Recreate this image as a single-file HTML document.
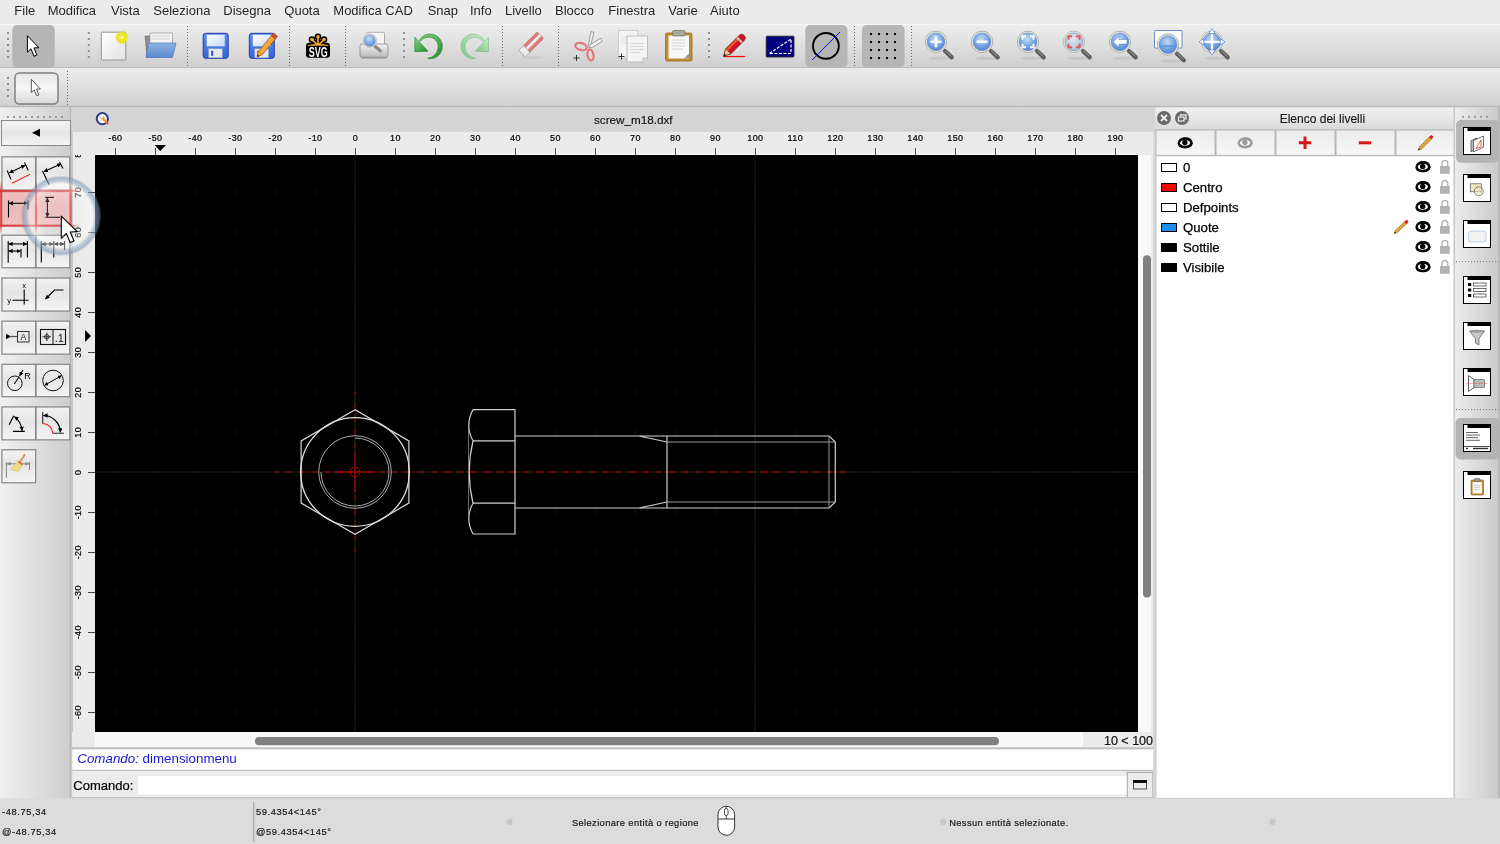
<!DOCTYPE html>
<html><head><meta charset="utf-8"><title>LibreCAD</title>
<style>html,body{margin:0;padding:0;overflow:hidden;background:#dcdcdc;width:1500px;height:844px}svg{display:block;will-change:transform}text{font-family:"Liberation Sans",sans-serif}</style>
</head><body><svg width="1500" height="844" viewBox="0 0 1500 844">
<defs>
<linearGradient id="gTb1" x1="0" y1="0" x2="0" y2="1"><stop offset="0" stop-color="#eeeeee"/><stop offset="1" stop-color="#cfcfcf"/></linearGradient>
<linearGradient id="gTb2" x1="0" y1="0" x2="0" y2="1"><stop offset="0" stop-color="#ececec"/><stop offset="1" stop-color="#d0d0d0"/></linearGradient>
<linearGradient id="gDockH" x1="0" y1="0" x2="1" y2="0"><stop offset="0" stop-color="#f0f0f0"/><stop offset="1" stop-color="#cdcdcd"/></linearGradient>
<linearGradient id="gBtn" x1="0" y1="0" x2="0" y2="1"><stop offset="0" stop-color="#f4f4f4"/><stop offset="0.5" stop-color="#e6e6e6"/><stop offset="1" stop-color="#f4f4f4"/></linearGradient>
<linearGradient id="gPanTitle" x1="0" y1="0" x2="0" y2="1"><stop offset="0" stop-color="#f0f0f0"/><stop offset="1" stop-color="#dcdcdc"/></linearGradient>
<linearGradient id="gLyrBtn" x1="0" y1="0" x2="0" y2="1"><stop offset="0" stop-color="#ececec"/><stop offset="1" stop-color="#f6f6f6"/></linearGradient>
</defs>
<rect x="0" y="0" width="1500" height="844" fill="#dcdcdc"/>
<rect x="0" y="0" width="1500" height="24" fill="#ececec"/>
<text x="14.3" y="15.3" font-size="13" fill="#262626" text-anchor="start" >File</text>
<text x="47.7" y="15.3" font-size="13" fill="#262626" text-anchor="start" >Modifica</text>
<text x="111" y="15.3" font-size="13" fill="#262626" text-anchor="start" >Vista</text>
<text x="153.3" y="15.3" font-size="13" fill="#262626" text-anchor="start" >Seleziona</text>
<text x="223.3" y="15.3" font-size="13" fill="#262626" text-anchor="start" >Disegna</text>
<text x="284.3" y="15.3" font-size="13" fill="#262626" text-anchor="start" >Quota</text>
<text x="333.3" y="15.3" font-size="13" fill="#262626" text-anchor="start" >Modifica CAD</text>
<text x="427.7" y="15.3" font-size="13" fill="#262626" text-anchor="start" >Snap</text>
<text x="470" y="15.3" font-size="13" fill="#262626" text-anchor="start" >Info</text>
<text x="505" y="15.3" font-size="13" fill="#262626" text-anchor="start" >Livello</text>
<text x="555" y="15.3" font-size="13" fill="#262626" text-anchor="start" >Blocco</text>
<text x="608.3" y="15.3" font-size="13" fill="#262626" text-anchor="start" >Finestra</text>
<text x="668.3" y="15.3" font-size="13" fill="#262626" text-anchor="start" >Varie</text>
<text x="710" y="15.3" font-size="13" fill="#262626" text-anchor="start" >Aiuto</text>
<rect x="0" y="24" width="1500" height="44" fill="url(#gTb1)"/>
<rect x="0" y="24" width="1500" height="1" fill="#f7f7f7"/>
<rect x="0" y="67.2" width="1500" height="1.1" fill="#bababa"/>
<rect x="0" y="68.3" width="1500" height="1" fill="#f7f7f7"/>
<rect x="0" y="69.3" width="1500" height="37.7" fill="url(#gTb2)"/>
<rect x="0" y="105.8" width="1500" height="1.5" fill="#b8b8b8"/>
<rect x="0" y="107.5" width="71" height="691" fill="url(#gDockH)"/>
<rect x="69.8" y="107.5" width="1.6" height="691" fill="#b9b9b9"/>
<rect x="7" y="116" width="2" height="2" fill="#9a9a9a"/>
<rect x="13" y="116" width="2" height="2" fill="#9a9a9a"/>
<rect x="19" y="116" width="2" height="2" fill="#9a9a9a"/>
<rect x="25" y="116" width="2" height="2" fill="#9a9a9a"/>
<rect x="31" y="116" width="2" height="2" fill="#9a9a9a"/>
<rect x="37" y="116" width="2" height="2" fill="#9a9a9a"/>
<rect x="43" y="116" width="2" height="2" fill="#9a9a9a"/>
<rect x="49" y="116" width="2" height="2" fill="#9a9a9a"/>
<rect x="55" y="116" width="2" height="2" fill="#9a9a9a"/>
<rect x="61" y="116" width="2" height="2" fill="#9a9a9a"/>
<rect x="1.5" y="120.5" width="69" height="25" fill="url(#gBtn)" stroke="#8a8a8a" stroke-width="1"/>
<path d="M32,132.8 L40,128.8 L40,136.8 Z" fill="#000"/>
<rect x="71.5" y="107.5" width="1083" height="24.3" fill="#d4d4d4"/>
<rect x="71.5" y="131.8" width="1082.5" height="23.2" fill="#ebebeb"/>
<rect x="95" y="154" width="1043" height="1" fill="#f9f9f9"/>
<rect x="71.5" y="155" width="23.5" height="577" fill="#ebebeb"/>
<rect x="71.4" y="131.8" width="1.2" height="616" fill="#bdbdbd"/>
<text x="633.3" y="123.9" font-size="11.7" fill="#111" text-anchor="middle" stroke="#111" stroke-width="0.15">screw_m18.dxf</text>
<rect x="95" y="155" width="1043" height="577" fill="#000"/>
<rect x="1138" y="155" width="15.3" height="592.8" fill="#f9f9f9"/>
<rect x="95" y="732" width="1043" height="15.5" fill="#f9f9f9"/>
<rect x="72" y="732" width="23" height="15.5" fill="#ebebeb"/>
<rect x="1151" y="155" width="2.3" height="592.8" fill="#ececec"/>
<rect x="1143" y="255.2" width="8" height="342.3" rx="4" fill="#808080"/>
<rect x="255" y="737" width="744" height="8.3" rx="4.1" fill="#808080"/>
<rect x="1083" y="732" width="70.3" height="15.5" fill="#ebebeb"/>
<text x="1153" y="744.8" font-size="12.5" fill="#111" text-anchor="end" stroke="#111" stroke-width="0.2">10 &lt; 100</text>
<rect x="72" y="747.3" width="1081.3" height="2.2" fill="#c0c0c0"/>
<rect x="72.5" y="749.5" width="1080.8" height="20.5" fill="#ffffff"/>
<rect x="72.5" y="769.8" width="1080.8" height="1.2" fill="#bdbdbd"/>
<text x="77.3" y="762.7" font-size="13.35" fill="#1818d8"><tspan font-style="italic">Comando:</tspan> dimensionmenu</text>
<rect x="72.5" y="771" width="1080.8" height="27" fill="#ececec"/>
<text x="73.3" y="790" font-size="13" fill="#000" text-anchor="start" stroke="#000" stroke-width="0.2">Comando:</text>
<rect x="138" y="776" width="989" height="18.5" fill="#ffffff"/>
<rect x="1127.3" y="772.3" width="25.6" height="25.2" fill="#ececec" stroke="#a8a8a8" stroke-width="1"/>
<rect x="1133.5" y="780.5" width="13" height="8.5" fill="#f0f0f0" stroke="#555" stroke-width="1"/>
<rect x="1133" y="780" width="14" height="3" fill="#111"/>
<rect x="70" y="797" width="1085" height="1.5" fill="#c4c4c4"/>
<rect x="1153.3" y="107.5" width="2.4" height="691" fill="#d6d6d6"/>
<rect x="1155.5" y="107.5" width="299" height="21" fill="url(#gPanTitle)"/>
<text x="1322.4" y="123.3" font-size="12" fill="#1a1a1a" text-anchor="middle" stroke="#1a1a1a" stroke-width="0.15">Elenco dei livelli</text>
<circle cx="1164" cy="118" r="7" fill="#6a6a6a"/>
<path d="M1161,115 L1167,121 M1167,115 L1161,121" stroke="#eee" stroke-width="1.8"/>
<circle cx="1182" cy="118" r="7" fill="#6a6a6a"/>
<rect x="1178.5" y="117" width="5.5" height="4" fill="none" stroke="#eee" stroke-width="1.2"/>
<path d="M1180.5,116.5 V114.8 H1186 V119 H1184.3" fill="none" stroke="#eee" stroke-width="1.2"/>
<rect x="1155.5" y="129.3" width="299" height="27" fill="#b8b8b8"/>
<rect x="1156.5" y="130.6" width="58" height="24.3" fill="url(#gLyrBtn)"/>
<rect x="1216.5" y="130.6" width="58" height="24.3" fill="url(#gLyrBtn)"/>
<rect x="1276.5" y="130.6" width="58" height="24.3" fill="url(#gLyrBtn)"/>
<rect x="1336.5" y="130.6" width="58" height="24.3" fill="url(#gLyrBtn)"/>
<rect x="1396.5" y="130.6" width="58" height="24.3" fill="url(#gLyrBtn)"/>
<rect x="1155.8" y="156.3" width="298" height="641.7" fill="#ffffff"/>
<rect x="1155.3" y="156" width="1.2" height="642" fill="#c8c8c8"/>
<rect x="1453.5" y="107.5" width="1.5" height="691" fill="#c8c8c8"/>
<rect x="1155.3" y="797.8" width="299.7" height="1.2" fill="#c8c8c8"/>
<rect x="1161.5" y="163.5" width="15" height="8" fill="#ffffff" stroke="#000" stroke-width="1"/>
<text x="1183" y="171.5" font-size="13.2" fill="#000" text-anchor="start" stroke="#000" stroke-width="0.25">0</text>
<rect x="1161.5" y="183.5" width="15" height="8" fill="#ff0000" stroke="#000" stroke-width="1"/>
<text x="1183" y="191.5" font-size="13.2" fill="#000" text-anchor="start" stroke="#000" stroke-width="0.25">Centro</text>
<rect x="1161.5" y="203.5" width="15" height="8" fill="#ffffff" stroke="#000" stroke-width="1"/>
<text x="1183" y="211.5" font-size="13.2" fill="#000" text-anchor="start" stroke="#000" stroke-width="0.25">Defpoints</text>
<rect x="1161.5" y="223.5" width="15" height="8" fill="#1e8cf0" stroke="#000" stroke-width="1"/>
<text x="1183" y="231.5" font-size="13.2" fill="#000" text-anchor="start" stroke="#000" stroke-width="0.25">Quote</text>
<rect x="1161.5" y="243.5" width="15" height="8" fill="#000000" stroke="#000" stroke-width="1"/>
<text x="1183" y="251.5" font-size="13.2" fill="#000" text-anchor="start" stroke="#000" stroke-width="0.25">Sottile</text>
<rect x="1161.5" y="263.5" width="15" height="8" fill="#000000" stroke="#000" stroke-width="1"/>
<text x="1183" y="271.5" font-size="13.2" fill="#000" text-anchor="start" stroke="#000" stroke-width="0.25">Visibile</text>
<linearGradient id="gDockR" x1="0" y1="0" x2="1" y2="0"><stop offset="0" stop-color="#ececec"/><stop offset="1" stop-color="#c9c9c9"/></linearGradient>
<rect x="1455" y="107.5" width="45" height="691" fill="url(#gDockR)"/>
<rect x="1498" y="107.5" width="2" height="691" fill="#bababa"/>
<rect x="1462" y="115.8" width="2" height="2" fill="#9a9a9a"/>
<rect x="1468" y="115.8" width="2" height="2" fill="#9a9a9a"/>
<rect x="1474" y="115.8" width="2" height="2" fill="#9a9a9a"/>
<rect x="1480" y="115.8" width="2" height="2" fill="#9a9a9a"/>
<rect x="1486" y="115.8" width="2" height="2" fill="#9a9a9a"/>
<rect x="0" y="798.5" width="1500" height="45.5" fill="#dcdcdc"/>
<text x="2" y="814.9" font-size="9.3" fill="#1a1a1a" text-anchor="start" letter-spacing="0.6" stroke="#1a1a1a" stroke-width="0.2">-48.75,34</text>
<text x="2" y="835.3" font-size="9.3" fill="#1a1a1a" text-anchor="start" letter-spacing="0.6" stroke="#1a1a1a" stroke-width="0.2">@-48.75,34</text>
<rect x="253.3" y="802" width="1" height="40" fill="#9a9a9a"/>
<text x="256" y="814.9" font-size="9.3" fill="#1a1a1a" text-anchor="start" letter-spacing="0.6" stroke="#1a1a1a" stroke-width="0.2">59.4354&lt;145°</text>
<text x="256" y="835.3" font-size="9.3" fill="#1a1a1a" text-anchor="start" letter-spacing="0.6" stroke="#1a1a1a" stroke-width="0.2">@59.4354&lt;145°</text>
<circle cx="509.5" cy="822" r="3" fill="#c6c6c6"/>
<text x="571.9" y="826" font-size="9.3" fill="#1a1a1a" text-anchor="start" letter-spacing="0.4" stroke="#1a1a1a" stroke-width="0.2">Selezionare entità o regione</text>
<circle cx="943.2" cy="822" r="3" fill="#c6c6c6"/>
<text x="949.2" y="826" font-size="9.3" fill="#1a1a1a" text-anchor="start" letter-spacing="0.4" stroke="#1a1a1a" stroke-width="0.2">Nessun entità selezionate.</text>
<circle cx="1272.5" cy="822" r="3" fill="#c6c6c6"/>
<rect x="718" y="806.3" width="16.6" height="29" rx="8.3" fill="#ffffff" stroke="#333" stroke-width="1"/>
<path d="M718.3,819 H734.3" stroke="#333" stroke-width="1"/>
<rect x="724.5" y="808.5" width="3.5" height="7" rx="1.7" fill="#fff" stroke="#333" stroke-width="0.9"/>
<path d="M726.3,806.5 V808.5 M726.3,815.5 V819" stroke="#333" stroke-width="0.9"/>
<rect x="115" y="148" width="1" height="7" fill="#484848"/>
<text x="115.4" y="140.8" font-size="9" fill="#000" text-anchor="middle" letter-spacing="0.45" stroke="#000" stroke-width="0.2">-60</text>
<rect x="155" y="148" width="1" height="7" fill="#484848"/>
<text x="155.4" y="140.8" font-size="9" fill="#000" text-anchor="middle" letter-spacing="0.45" stroke="#000" stroke-width="0.2">-50</text>
<rect x="195" y="148" width="1" height="7" fill="#484848"/>
<text x="195.4" y="140.8" font-size="9" fill="#000" text-anchor="middle" letter-spacing="0.45" stroke="#000" stroke-width="0.2">-40</text>
<rect x="235" y="148" width="1" height="7" fill="#484848"/>
<text x="235.4" y="140.8" font-size="9" fill="#000" text-anchor="middle" letter-spacing="0.45" stroke="#000" stroke-width="0.2">-30</text>
<rect x="275" y="148" width="1" height="7" fill="#484848"/>
<text x="275.4" y="140.8" font-size="9" fill="#000" text-anchor="middle" letter-spacing="0.45" stroke="#000" stroke-width="0.2">-20</text>
<rect x="315" y="148" width="1" height="7" fill="#484848"/>
<text x="315.4" y="140.8" font-size="9" fill="#000" text-anchor="middle" letter-spacing="0.45" stroke="#000" stroke-width="0.2">-10</text>
<rect x="355" y="148" width="1" height="7" fill="#484848"/>
<text x="355.4" y="140.8" font-size="9" fill="#000" text-anchor="middle" letter-spacing="0.45" stroke="#000" stroke-width="0.2">0</text>
<rect x="395" y="148" width="1" height="7" fill="#484848"/>
<text x="395.4" y="140.8" font-size="9" fill="#000" text-anchor="middle" letter-spacing="0.45" stroke="#000" stroke-width="0.2">10</text>
<rect x="435" y="148" width="1" height="7" fill="#484848"/>
<text x="435.4" y="140.8" font-size="9" fill="#000" text-anchor="middle" letter-spacing="0.45" stroke="#000" stroke-width="0.2">20</text>
<rect x="475" y="148" width="1" height="7" fill="#484848"/>
<text x="475.4" y="140.8" font-size="9" fill="#000" text-anchor="middle" letter-spacing="0.45" stroke="#000" stroke-width="0.2">30</text>
<rect x="515" y="148" width="1" height="7" fill="#484848"/>
<text x="515.4" y="140.8" font-size="9" fill="#000" text-anchor="middle" letter-spacing="0.45" stroke="#000" stroke-width="0.2">40</text>
<rect x="555" y="148" width="1" height="7" fill="#484848"/>
<text x="555.4" y="140.8" font-size="9" fill="#000" text-anchor="middle" letter-spacing="0.45" stroke="#000" stroke-width="0.2">50</text>
<rect x="595" y="148" width="1" height="7" fill="#484848"/>
<text x="595.4" y="140.8" font-size="9" fill="#000" text-anchor="middle" letter-spacing="0.45" stroke="#000" stroke-width="0.2">60</text>
<rect x="635" y="148" width="1" height="7" fill="#484848"/>
<text x="635.4" y="140.8" font-size="9" fill="#000" text-anchor="middle" letter-spacing="0.45" stroke="#000" stroke-width="0.2">70</text>
<rect x="675" y="148" width="1" height="7" fill="#484848"/>
<text x="675.4" y="140.8" font-size="9" fill="#000" text-anchor="middle" letter-spacing="0.45" stroke="#000" stroke-width="0.2">80</text>
<rect x="715" y="148" width="1" height="7" fill="#484848"/>
<text x="715.4" y="140.8" font-size="9" fill="#000" text-anchor="middle" letter-spacing="0.45" stroke="#000" stroke-width="0.2">90</text>
<rect x="755" y="148" width="1" height="7" fill="#484848"/>
<text x="755.4" y="140.8" font-size="9" fill="#000" text-anchor="middle" letter-spacing="0.45" stroke="#000" stroke-width="0.2">100</text>
<rect x="795" y="148" width="1" height="7" fill="#484848"/>
<text x="795.4" y="140.8" font-size="9" fill="#000" text-anchor="middle" letter-spacing="0.45" stroke="#000" stroke-width="0.2">110</text>
<rect x="835" y="148" width="1" height="7" fill="#484848"/>
<text x="835.4" y="140.8" font-size="9" fill="#000" text-anchor="middle" letter-spacing="0.45" stroke="#000" stroke-width="0.2">120</text>
<rect x="875" y="148" width="1" height="7" fill="#484848"/>
<text x="875.4" y="140.8" font-size="9" fill="#000" text-anchor="middle" letter-spacing="0.45" stroke="#000" stroke-width="0.2">130</text>
<rect x="915" y="148" width="1" height="7" fill="#484848"/>
<text x="915.4" y="140.8" font-size="9" fill="#000" text-anchor="middle" letter-spacing="0.45" stroke="#000" stroke-width="0.2">140</text>
<rect x="955" y="148" width="1" height="7" fill="#484848"/>
<text x="955.4" y="140.8" font-size="9" fill="#000" text-anchor="middle" letter-spacing="0.45" stroke="#000" stroke-width="0.2">150</text>
<rect x="995" y="148" width="1" height="7" fill="#484848"/>
<text x="995.4" y="140.8" font-size="9" fill="#000" text-anchor="middle" letter-spacing="0.45" stroke="#000" stroke-width="0.2">160</text>
<rect x="1035" y="148" width="1" height="7" fill="#484848"/>
<text x="1035.4" y="140.8" font-size="9" fill="#000" text-anchor="middle" letter-spacing="0.45" stroke="#000" stroke-width="0.2">170</text>
<rect x="1075" y="148" width="1" height="7" fill="#484848"/>
<text x="1075.4" y="140.8" font-size="9" fill="#000" text-anchor="middle" letter-spacing="0.45" stroke="#000" stroke-width="0.2">180</text>
<rect x="1115" y="148" width="1" height="7" fill="#484848"/>
<text x="1115.4" y="140.8" font-size="9" fill="#000" text-anchor="middle" letter-spacing="0.45" stroke="#000" stroke-width="0.2">190</text>
<clipPath id="cpVR"><rect x="72" y="155" width="23" height="577"/></clipPath>
<g clip-path="url(#cpVR)">
<rect x="88" y="752" width="7" height="1" fill="#484848"/>
<text transform="translate(81.0,752.2) rotate(-90)" x="0" y="0" font-size="9" fill="#000" stroke="#000" stroke-width="0.2" text-anchor="middle" letter-spacing="0.45">-70</text>
<rect x="88" y="712" width="7" height="1" fill="#484848"/>
<text transform="translate(81.0,712.2) rotate(-90)" x="0" y="0" font-size="9" fill="#000" stroke="#000" stroke-width="0.2" text-anchor="middle" letter-spacing="0.45">-60</text>
<rect x="88" y="672" width="7" height="1" fill="#484848"/>
<text transform="translate(81.0,672.2) rotate(-90)" x="0" y="0" font-size="9" fill="#000" stroke="#000" stroke-width="0.2" text-anchor="middle" letter-spacing="0.45">-50</text>
<rect x="88" y="632" width="7" height="1" fill="#484848"/>
<text transform="translate(81.0,632.2) rotate(-90)" x="0" y="0" font-size="9" fill="#000" stroke="#000" stroke-width="0.2" text-anchor="middle" letter-spacing="0.45">-40</text>
<rect x="88" y="592" width="7" height="1" fill="#484848"/>
<text transform="translate(81.0,592.2) rotate(-90)" x="0" y="0" font-size="9" fill="#000" stroke="#000" stroke-width="0.2" text-anchor="middle" letter-spacing="0.45">-30</text>
<rect x="88" y="552" width="7" height="1" fill="#484848"/>
<text transform="translate(81.0,552.2) rotate(-90)" x="0" y="0" font-size="9" fill="#000" stroke="#000" stroke-width="0.2" text-anchor="middle" letter-spacing="0.45">-20</text>
<rect x="88" y="512" width="7" height="1" fill="#484848"/>
<text transform="translate(81.0,512.2) rotate(-90)" x="0" y="0" font-size="9" fill="#000" stroke="#000" stroke-width="0.2" text-anchor="middle" letter-spacing="0.45">-10</text>
<rect x="88" y="472" width="7" height="1" fill="#484848"/>
<text transform="translate(81.0,472.2) rotate(-90)" x="0" y="0" font-size="9" fill="#000" stroke="#000" stroke-width="0.2" text-anchor="middle" letter-spacing="0.45">0</text>
<rect x="88" y="432" width="7" height="1" fill="#484848"/>
<text transform="translate(81.0,432.2) rotate(-90)" x="0" y="0" font-size="9" fill="#000" stroke="#000" stroke-width="0.2" text-anchor="middle" letter-spacing="0.45">10</text>
<rect x="88" y="392" width="7" height="1" fill="#484848"/>
<text transform="translate(81.0,392.2) rotate(-90)" x="0" y="0" font-size="9" fill="#000" stroke="#000" stroke-width="0.2" text-anchor="middle" letter-spacing="0.45">20</text>
<rect x="88" y="352" width="7" height="1" fill="#484848"/>
<text transform="translate(81.0,352.2) rotate(-90)" x="0" y="0" font-size="9" fill="#000" stroke="#000" stroke-width="0.2" text-anchor="middle" letter-spacing="0.45">30</text>
<rect x="88" y="312" width="7" height="1" fill="#484848"/>
<text transform="translate(81.0,312.2) rotate(-90)" x="0" y="0" font-size="9" fill="#000" stroke="#000" stroke-width="0.2" text-anchor="middle" letter-spacing="0.45">40</text>
<rect x="88" y="272" width="7" height="1" fill="#484848"/>
<text transform="translate(81.0,272.2) rotate(-90)" x="0" y="0" font-size="9" fill="#000" stroke="#000" stroke-width="0.2" text-anchor="middle" letter-spacing="0.45">50</text>
<rect x="88" y="232" width="7" height="1" fill="#484848"/>
<text transform="translate(81.0,232.2) rotate(-90)" x="0" y="0" font-size="9" fill="#000" stroke="#000" stroke-width="0.2" text-anchor="middle" letter-spacing="0.45">60</text>
<rect x="88" y="192" width="7" height="1" fill="#484848"/>
<text transform="translate(81.0,192.2) rotate(-90)" x="0" y="0" font-size="9" fill="#000" stroke="#000" stroke-width="0.2" text-anchor="middle" letter-spacing="0.45">70</text>
<rect x="88" y="152" width="7" height="1" fill="#484848"/>
<text transform="translate(81.0,152.2) rotate(-90)" x="0" y="0" font-size="9" fill="#000" stroke="#000" stroke-width="0.2" text-anchor="middle" letter-spacing="0.45">80</text>
</g>
<rect x="71.5" y="155" width="1.2" height="577" fill="#c4c4c4"/>
<path d="M154.6,145.1 L166,145.1 L160.3,151 Z" fill="#000"/>
<path d="M85.1,330 L91,336 L85.1,342 Z" fill="#000"/>
<clipPath id="cpCv"><rect x="95" y="155" width="1043" height="577"/></clipPath>
<g clip-path="url(#cpCv)">
<rect x="354.5" y="155" width="1" height="577" fill="#1c1c1c"/>
<rect x="754.5" y="155" width="1" height="577" fill="#1c1c1c"/>
<rect x="95" y="471.5" width="1043" height="1" fill="#1c1c1c"/>
<path d="M114.5,751.5h1v1h-1zM114.5,711.5h1v1h-1zM114.5,671.5h1v1h-1zM114.5,631.5h1v1h-1zM114.5,591.5h1v1h-1zM114.5,551.5h1v1h-1zM114.5,511.5h1v1h-1zM114.5,471.5h1v1h-1zM114.5,431.5h1v1h-1zM114.5,391.5h1v1h-1zM114.5,351.5h1v1h-1zM114.5,311.5h1v1h-1zM114.5,271.5h1v1h-1zM114.5,231.5h1v1h-1zM114.5,191.5h1v1h-1zM114.5,151.5h1v1h-1zM154.5,751.5h1v1h-1zM154.5,711.5h1v1h-1zM154.5,671.5h1v1h-1zM154.5,631.5h1v1h-1zM154.5,591.5h1v1h-1zM154.5,551.5h1v1h-1zM154.5,511.5h1v1h-1zM154.5,471.5h1v1h-1zM154.5,431.5h1v1h-1zM154.5,391.5h1v1h-1zM154.5,351.5h1v1h-1zM154.5,311.5h1v1h-1zM154.5,271.5h1v1h-1zM154.5,231.5h1v1h-1zM154.5,191.5h1v1h-1zM154.5,151.5h1v1h-1zM194.5,751.5h1v1h-1zM194.5,711.5h1v1h-1zM194.5,671.5h1v1h-1zM194.5,631.5h1v1h-1zM194.5,591.5h1v1h-1zM194.5,551.5h1v1h-1zM194.5,511.5h1v1h-1zM194.5,471.5h1v1h-1zM194.5,431.5h1v1h-1zM194.5,391.5h1v1h-1zM194.5,351.5h1v1h-1zM194.5,311.5h1v1h-1zM194.5,271.5h1v1h-1zM194.5,231.5h1v1h-1zM194.5,191.5h1v1h-1zM194.5,151.5h1v1h-1zM234.5,751.5h1v1h-1zM234.5,711.5h1v1h-1zM234.5,671.5h1v1h-1zM234.5,631.5h1v1h-1zM234.5,591.5h1v1h-1zM234.5,551.5h1v1h-1zM234.5,511.5h1v1h-1zM234.5,471.5h1v1h-1zM234.5,431.5h1v1h-1zM234.5,391.5h1v1h-1zM234.5,351.5h1v1h-1zM234.5,311.5h1v1h-1zM234.5,271.5h1v1h-1zM234.5,231.5h1v1h-1zM234.5,191.5h1v1h-1zM234.5,151.5h1v1h-1zM274.5,751.5h1v1h-1zM274.5,711.5h1v1h-1zM274.5,671.5h1v1h-1zM274.5,631.5h1v1h-1zM274.5,591.5h1v1h-1zM274.5,551.5h1v1h-1zM274.5,511.5h1v1h-1zM274.5,471.5h1v1h-1zM274.5,431.5h1v1h-1zM274.5,391.5h1v1h-1zM274.5,351.5h1v1h-1zM274.5,311.5h1v1h-1zM274.5,271.5h1v1h-1zM274.5,231.5h1v1h-1zM274.5,191.5h1v1h-1zM274.5,151.5h1v1h-1zM314.5,751.5h1v1h-1zM314.5,711.5h1v1h-1zM314.5,671.5h1v1h-1zM314.5,631.5h1v1h-1zM314.5,591.5h1v1h-1zM314.5,551.5h1v1h-1zM314.5,511.5h1v1h-1zM314.5,471.5h1v1h-1zM314.5,431.5h1v1h-1zM314.5,391.5h1v1h-1zM314.5,351.5h1v1h-1zM314.5,311.5h1v1h-1zM314.5,271.5h1v1h-1zM314.5,231.5h1v1h-1zM314.5,191.5h1v1h-1zM314.5,151.5h1v1h-1zM354.5,751.5h1v1h-1zM354.5,711.5h1v1h-1zM354.5,671.5h1v1h-1zM354.5,631.5h1v1h-1zM354.5,591.5h1v1h-1zM354.5,551.5h1v1h-1zM354.5,511.5h1v1h-1zM354.5,471.5h1v1h-1zM354.5,431.5h1v1h-1zM354.5,391.5h1v1h-1zM354.5,351.5h1v1h-1zM354.5,311.5h1v1h-1zM354.5,271.5h1v1h-1zM354.5,231.5h1v1h-1zM354.5,191.5h1v1h-1zM354.5,151.5h1v1h-1zM394.5,751.5h1v1h-1zM394.5,711.5h1v1h-1zM394.5,671.5h1v1h-1zM394.5,631.5h1v1h-1zM394.5,591.5h1v1h-1zM394.5,551.5h1v1h-1zM394.5,511.5h1v1h-1zM394.5,471.5h1v1h-1zM394.5,431.5h1v1h-1zM394.5,391.5h1v1h-1zM394.5,351.5h1v1h-1zM394.5,311.5h1v1h-1zM394.5,271.5h1v1h-1zM394.5,231.5h1v1h-1zM394.5,191.5h1v1h-1zM394.5,151.5h1v1h-1zM434.5,751.5h1v1h-1zM434.5,711.5h1v1h-1zM434.5,671.5h1v1h-1zM434.5,631.5h1v1h-1zM434.5,591.5h1v1h-1zM434.5,551.5h1v1h-1zM434.5,511.5h1v1h-1zM434.5,471.5h1v1h-1zM434.5,431.5h1v1h-1zM434.5,391.5h1v1h-1zM434.5,351.5h1v1h-1zM434.5,311.5h1v1h-1zM434.5,271.5h1v1h-1zM434.5,231.5h1v1h-1zM434.5,191.5h1v1h-1zM434.5,151.5h1v1h-1zM474.5,751.5h1v1h-1zM474.5,711.5h1v1h-1zM474.5,671.5h1v1h-1zM474.5,631.5h1v1h-1zM474.5,591.5h1v1h-1zM474.5,551.5h1v1h-1zM474.5,511.5h1v1h-1zM474.5,471.5h1v1h-1zM474.5,431.5h1v1h-1zM474.5,391.5h1v1h-1zM474.5,351.5h1v1h-1zM474.5,311.5h1v1h-1zM474.5,271.5h1v1h-1zM474.5,231.5h1v1h-1zM474.5,191.5h1v1h-1zM474.5,151.5h1v1h-1zM514.5,751.5h1v1h-1zM514.5,711.5h1v1h-1zM514.5,671.5h1v1h-1zM514.5,631.5h1v1h-1zM514.5,591.5h1v1h-1zM514.5,551.5h1v1h-1zM514.5,511.5h1v1h-1zM514.5,471.5h1v1h-1zM514.5,431.5h1v1h-1zM514.5,391.5h1v1h-1zM514.5,351.5h1v1h-1zM514.5,311.5h1v1h-1zM514.5,271.5h1v1h-1zM514.5,231.5h1v1h-1zM514.5,191.5h1v1h-1zM514.5,151.5h1v1h-1zM554.5,751.5h1v1h-1zM554.5,711.5h1v1h-1zM554.5,671.5h1v1h-1zM554.5,631.5h1v1h-1zM554.5,591.5h1v1h-1zM554.5,551.5h1v1h-1zM554.5,511.5h1v1h-1zM554.5,471.5h1v1h-1zM554.5,431.5h1v1h-1zM554.5,391.5h1v1h-1zM554.5,351.5h1v1h-1zM554.5,311.5h1v1h-1zM554.5,271.5h1v1h-1zM554.5,231.5h1v1h-1zM554.5,191.5h1v1h-1zM554.5,151.5h1v1h-1zM594.5,751.5h1v1h-1zM594.5,711.5h1v1h-1zM594.5,671.5h1v1h-1zM594.5,631.5h1v1h-1zM594.5,591.5h1v1h-1zM594.5,551.5h1v1h-1zM594.5,511.5h1v1h-1zM594.5,471.5h1v1h-1zM594.5,431.5h1v1h-1zM594.5,391.5h1v1h-1zM594.5,351.5h1v1h-1zM594.5,311.5h1v1h-1zM594.5,271.5h1v1h-1zM594.5,231.5h1v1h-1zM594.5,191.5h1v1h-1zM594.5,151.5h1v1h-1zM634.5,751.5h1v1h-1zM634.5,711.5h1v1h-1zM634.5,671.5h1v1h-1zM634.5,631.5h1v1h-1zM634.5,591.5h1v1h-1zM634.5,551.5h1v1h-1zM634.5,511.5h1v1h-1zM634.5,471.5h1v1h-1zM634.5,431.5h1v1h-1zM634.5,391.5h1v1h-1zM634.5,351.5h1v1h-1zM634.5,311.5h1v1h-1zM634.5,271.5h1v1h-1zM634.5,231.5h1v1h-1zM634.5,191.5h1v1h-1zM634.5,151.5h1v1h-1zM674.5,751.5h1v1h-1zM674.5,711.5h1v1h-1zM674.5,671.5h1v1h-1zM674.5,631.5h1v1h-1zM674.5,591.5h1v1h-1zM674.5,551.5h1v1h-1zM674.5,511.5h1v1h-1zM674.5,471.5h1v1h-1zM674.5,431.5h1v1h-1zM674.5,391.5h1v1h-1zM674.5,351.5h1v1h-1zM674.5,311.5h1v1h-1zM674.5,271.5h1v1h-1zM674.5,231.5h1v1h-1zM674.5,191.5h1v1h-1zM674.5,151.5h1v1h-1zM714.5,751.5h1v1h-1zM714.5,711.5h1v1h-1zM714.5,671.5h1v1h-1zM714.5,631.5h1v1h-1zM714.5,591.5h1v1h-1zM714.5,551.5h1v1h-1zM714.5,511.5h1v1h-1zM714.5,471.5h1v1h-1zM714.5,431.5h1v1h-1zM714.5,391.5h1v1h-1zM714.5,351.5h1v1h-1zM714.5,311.5h1v1h-1zM714.5,271.5h1v1h-1zM714.5,231.5h1v1h-1zM714.5,191.5h1v1h-1zM714.5,151.5h1v1h-1zM754.5,751.5h1v1h-1zM754.5,711.5h1v1h-1zM754.5,671.5h1v1h-1zM754.5,631.5h1v1h-1zM754.5,591.5h1v1h-1zM754.5,551.5h1v1h-1zM754.5,511.5h1v1h-1zM754.5,471.5h1v1h-1zM754.5,431.5h1v1h-1zM754.5,391.5h1v1h-1zM754.5,351.5h1v1h-1zM754.5,311.5h1v1h-1zM754.5,271.5h1v1h-1zM754.5,231.5h1v1h-1zM754.5,191.5h1v1h-1zM754.5,151.5h1v1h-1zM794.5,751.5h1v1h-1zM794.5,711.5h1v1h-1zM794.5,671.5h1v1h-1zM794.5,631.5h1v1h-1zM794.5,591.5h1v1h-1zM794.5,551.5h1v1h-1zM794.5,511.5h1v1h-1zM794.5,471.5h1v1h-1zM794.5,431.5h1v1h-1zM794.5,391.5h1v1h-1zM794.5,351.5h1v1h-1zM794.5,311.5h1v1h-1zM794.5,271.5h1v1h-1zM794.5,231.5h1v1h-1zM794.5,191.5h1v1h-1zM794.5,151.5h1v1h-1zM834.5,751.5h1v1h-1zM834.5,711.5h1v1h-1zM834.5,671.5h1v1h-1zM834.5,631.5h1v1h-1zM834.5,591.5h1v1h-1zM834.5,551.5h1v1h-1zM834.5,511.5h1v1h-1zM834.5,471.5h1v1h-1zM834.5,431.5h1v1h-1zM834.5,391.5h1v1h-1zM834.5,351.5h1v1h-1zM834.5,311.5h1v1h-1zM834.5,271.5h1v1h-1zM834.5,231.5h1v1h-1zM834.5,191.5h1v1h-1zM834.5,151.5h1v1h-1zM874.5,751.5h1v1h-1zM874.5,711.5h1v1h-1zM874.5,671.5h1v1h-1zM874.5,631.5h1v1h-1zM874.5,591.5h1v1h-1zM874.5,551.5h1v1h-1zM874.5,511.5h1v1h-1zM874.5,471.5h1v1h-1zM874.5,431.5h1v1h-1zM874.5,391.5h1v1h-1zM874.5,351.5h1v1h-1zM874.5,311.5h1v1h-1zM874.5,271.5h1v1h-1zM874.5,231.5h1v1h-1zM874.5,191.5h1v1h-1zM874.5,151.5h1v1h-1zM914.5,751.5h1v1h-1zM914.5,711.5h1v1h-1zM914.5,671.5h1v1h-1zM914.5,631.5h1v1h-1zM914.5,591.5h1v1h-1zM914.5,551.5h1v1h-1zM914.5,511.5h1v1h-1zM914.5,471.5h1v1h-1zM914.5,431.5h1v1h-1zM914.5,391.5h1v1h-1zM914.5,351.5h1v1h-1zM914.5,311.5h1v1h-1zM914.5,271.5h1v1h-1zM914.5,231.5h1v1h-1zM914.5,191.5h1v1h-1zM914.5,151.5h1v1h-1zM954.5,751.5h1v1h-1zM954.5,711.5h1v1h-1zM954.5,671.5h1v1h-1zM954.5,631.5h1v1h-1zM954.5,591.5h1v1h-1zM954.5,551.5h1v1h-1zM954.5,511.5h1v1h-1zM954.5,471.5h1v1h-1zM954.5,431.5h1v1h-1zM954.5,391.5h1v1h-1zM954.5,351.5h1v1h-1zM954.5,311.5h1v1h-1zM954.5,271.5h1v1h-1zM954.5,231.5h1v1h-1zM954.5,191.5h1v1h-1zM954.5,151.5h1v1h-1zM994.5,751.5h1v1h-1zM994.5,711.5h1v1h-1zM994.5,671.5h1v1h-1zM994.5,631.5h1v1h-1zM994.5,591.5h1v1h-1zM994.5,551.5h1v1h-1zM994.5,511.5h1v1h-1zM994.5,471.5h1v1h-1zM994.5,431.5h1v1h-1zM994.5,391.5h1v1h-1zM994.5,351.5h1v1h-1zM994.5,311.5h1v1h-1zM994.5,271.5h1v1h-1zM994.5,231.5h1v1h-1zM994.5,191.5h1v1h-1zM994.5,151.5h1v1h-1zM1034.5,751.5h1v1h-1zM1034.5,711.5h1v1h-1zM1034.5,671.5h1v1h-1zM1034.5,631.5h1v1h-1zM1034.5,591.5h1v1h-1zM1034.5,551.5h1v1h-1zM1034.5,511.5h1v1h-1zM1034.5,471.5h1v1h-1zM1034.5,431.5h1v1h-1zM1034.5,391.5h1v1h-1zM1034.5,351.5h1v1h-1zM1034.5,311.5h1v1h-1zM1034.5,271.5h1v1h-1zM1034.5,231.5h1v1h-1zM1034.5,191.5h1v1h-1zM1034.5,151.5h1v1h-1zM1074.5,751.5h1v1h-1zM1074.5,711.5h1v1h-1zM1074.5,671.5h1v1h-1zM1074.5,631.5h1v1h-1zM1074.5,591.5h1v1h-1zM1074.5,551.5h1v1h-1zM1074.5,511.5h1v1h-1zM1074.5,471.5h1v1h-1zM1074.5,431.5h1v1h-1zM1074.5,391.5h1v1h-1zM1074.5,351.5h1v1h-1zM1074.5,311.5h1v1h-1zM1074.5,271.5h1v1h-1zM1074.5,231.5h1v1h-1zM1074.5,191.5h1v1h-1zM1074.5,151.5h1v1h-1zM1114.5,751.5h1v1h-1zM1114.5,711.5h1v1h-1zM1114.5,671.5h1v1h-1zM1114.5,631.5h1v1h-1zM1114.5,591.5h1v1h-1zM1114.5,551.5h1v1h-1zM1114.5,511.5h1v1h-1zM1114.5,471.5h1v1h-1zM1114.5,431.5h1v1h-1zM1114.5,391.5h1v1h-1zM1114.5,351.5h1v1h-1zM1114.5,311.5h1v1h-1zM1114.5,271.5h1v1h-1zM1114.5,231.5h1v1h-1zM1114.5,191.5h1v1h-1zM1114.5,151.5h1v1h-1z" fill="#484848"/>
<g stroke="#7c0c0c" stroke-width="1.3" fill="none">
<path d="M275,472 H851" stroke-dasharray="7 2.6 1 2.6" stroke-dashoffset="2.9"/>
<path d="M355,391.5 V552.5" stroke-dasharray="7 2.6 1 2.6" stroke-dashoffset="2.9"/>
</g>
<path d="M334.8,472 H375.2 M355,452 V492" stroke="#8e0606" stroke-width="1.3"/>
<circle cx="355" cy="472" r="4.8" fill="none" stroke-width="1" stroke="#c00000"/>
<polygon points="355.00,409.80 301.13,440.90 301.13,503.10 355.00,534.20 408.87,503.10 408.87,440.90" fill="none" stroke="#d8d8d8" stroke-width="1.2"/>
<circle cx="355" cy="472" r="54.3" fill="none" stroke="#e0e0e0" stroke-width="1.3"/>
<circle cx="355" cy="472" r="36.3" fill="none" stroke="#a8a8a8" stroke-width="1"/>
<path d="M355,438 A34,34 0 1 1 321,472" fill="none" stroke="#a8a8a8" stroke-width="1"/>
<g fill="none" stroke="#cfcfcf" stroke-width="1.2">
<path d="M473,409.6 H515 V534 H473"/>
<path d="M473,440.8 H515 M473,503.2 H515"/>
<path d="M473,409.6 Q464.5,425.2 473,440.8 Q465.5,472 473,503.2 Q464.5,518.6 473,534"/>
<path d="M515,436 H639 L667,442 M639,436 H829 L835.3,442 V502 L829,508 H639 L667,502 M515,508 H639"/>
<path d="M667,436 V508"/>
</g>
<path d="M468.5,428 V516" stroke="#8a8a8a" stroke-width="0.8" fill="none"/>
<path d="M667,442 H835 M667,502 H835 M829,436 V508" stroke="#9a9a9a" stroke-width="1" fill="none"/>
</g>
<defs>
<radialGradient id="gGlow" cx="0.5" cy="0.5" r="0.5"><stop offset="0" stop-color="#ffffe8"/><stop offset="0.3" stop-color="#f2ea30"/><stop offset="0.7" stop-color="#eee420"/><stop offset="1" stop-color="#eee420" stop-opacity="0"/></radialGradient>
<linearGradient id="gPage" x1="0" y1="0" x2="1" y2="1"><stop offset="0" stop-color="#ffffff"/><stop offset="1" stop-color="#e2e2e2"/></linearGradient>
<linearGradient id="gFloppy" x1="0" y1="0" x2="0" y2="1"><stop offset="0" stop-color="#5b8ff0"/><stop offset="1" stop-color="#3467d8"/></linearGradient>
<linearGradient id="gLabel" x1="0" y1="0" x2="1" y2="1"><stop offset="0" stop-color="#ffffff"/><stop offset="1" stop-color="#c9d8f5"/></linearGradient>
<linearGradient id="gFolder" x1="0" y1="0" x2="0" y2="1"><stop offset="0" stop-color="#8fb4e6"/><stop offset="1" stop-color="#5a8ad0"/></linearGradient>
<radialGradient id="gLens" cx="0.45" cy="0.35" r="0.65"><stop offset="0" stop-color="#c7dcf6"/><stop offset="0.6" stop-color="#78a6e2"/><stop offset="1" stop-color="#4f86d6"/></radialGradient>
<radialGradient id="gLensR" cx="0.45" cy="0.35" r="0.65"><stop offset="0" stop-color="#dfe6ee"/><stop offset="1" stop-color="#aac0d8"/></radialGradient>
<linearGradient id="gPrinter" x1="0" y1="0" x2="0" y2="1"><stop offset="0" stop-color="#f4f4f4"/><stop offset="1" stop-color="#b8b8b8"/></linearGradient>
<linearGradient id="gBtn2" x1="0" y1="0" x2="0" y2="1"><stop offset="0" stop-color="#e8e8e8"/><stop offset="0.5" stop-color="#f6f6f6"/><stop offset="1" stop-color="#d8d8d8"/></linearGradient>
</defs>
<rect x="7" y="32" width="2" height="2" fill="#8e8e8e"/>
<rect x="7" y="38" width="2" height="2" fill="#8e8e8e"/>
<rect x="7" y="44" width="2" height="2" fill="#8e8e8e"/>
<rect x="7" y="50" width="2" height="2" fill="#8e8e8e"/>
<rect x="7" y="56" width="2" height="2" fill="#8e8e8e"/>
<rect x="87.8" y="32" width="2" height="2" fill="#8e8e8e"/>
<rect x="87.8" y="38" width="2" height="2" fill="#8e8e8e"/>
<rect x="87.8" y="44" width="2" height="2" fill="#8e8e8e"/>
<rect x="87.8" y="50" width="2" height="2" fill="#8e8e8e"/>
<rect x="87.8" y="56" width="2" height="2" fill="#8e8e8e"/>
<rect x="403" y="32" width="2" height="2" fill="#8e8e8e"/>
<rect x="403" y="38" width="2" height="2" fill="#8e8e8e"/>
<rect x="403" y="44" width="2" height="2" fill="#8e8e8e"/>
<rect x="403" y="50" width="2" height="2" fill="#8e8e8e"/>
<rect x="403" y="56" width="2" height="2" fill="#8e8e8e"/>
<rect x="708" y="32" width="2" height="2" fill="#8e8e8e"/>
<rect x="708" y="38" width="2" height="2" fill="#8e8e8e"/>
<rect x="708" y="44" width="2" height="2" fill="#8e8e8e"/>
<rect x="708" y="50" width="2" height="2" fill="#8e8e8e"/>
<rect x="708" y="56" width="2" height="2" fill="#8e8e8e"/>
<path d="M187.5,26 V66" stroke="#6e6e6e" stroke-width="1" stroke-dasharray="1 2"/>
<path d="M289.5,26 V66" stroke="#6e6e6e" stroke-width="1" stroke-dasharray="1 2"/>
<path d="M345.5,26 V66" stroke="#6e6e6e" stroke-width="1" stroke-dasharray="1 2"/>
<path d="M502.5,26 V66" stroke="#6e6e6e" stroke-width="1" stroke-dasharray="1 2"/>
<path d="M558.5,26 V66" stroke="#6e6e6e" stroke-width="1" stroke-dasharray="1 2"/>
<path d="M854.5,26 V66" stroke="#6e6e6e" stroke-width="1" stroke-dasharray="1 2"/>
<path d="M911.5,26 V66" stroke="#6e6e6e" stroke-width="1" stroke-dasharray="1 2"/>
<rect x="12.3" y="25" width="42.4" height="43" rx="5" fill="#b5b5b5"/>
<path d="M27.4,35.7 V52.2 L31,48.8 L34,56.3 L36.9,55.1 L34,47.9 L38.8,47.7 Z" fill="#fff" stroke="#000" stroke-width="1" stroke-linejoin="round"/>
<rect x="101.5" y="33" width="24.3" height="27" rx="1.5" fill="#9a9a9a" opacity="0.5"/>
<rect x="101.3" y="32.2" width="24.5" height="27.8" rx="1" fill="url(#gPage)" stroke="#8c8c8c" stroke-width="0.9"/>
<circle cx="121.9" cy="37.6" r="7" fill="url(#gGlow)"/>
<path d="M145,36 H152 L154,38 H159 V57 H147 Z" fill="#8e8e8e" stroke="#6a6a6a" stroke-width="0.6"/>
<path d="M150,33 H172.5 V47 H150 Z" fill="#f3f3f3" stroke="#9a9a9a" stroke-width="0.7"/>
<path d="M152,36 H170 M152,39 H170" stroke="#c8c8c8" stroke-width="0.8"/>
<path d="M148.5,43 H176 L172.5,57.5 H146 Z" fill="url(#gFolder)" stroke="#4f78b8" stroke-width="0.7"/>
<rect x="203.2" y="33.3" width="25" height="25" rx="2.5" fill="url(#gFloppy)" stroke="#2538a8" stroke-width="1"/>
<rect x="206.7" y="34.8" width="18" height="11.5" fill="url(#gLabel)"/>
<rect x="208.7" y="48.8" width="13.5" height="9" fill="#e6e6ee" stroke="#aab" stroke-width="0.5"/>
<rect x="211.2" y="50.8" width="2" height="5" fill="#2a50c8"/>
<rect x="249.3" y="33.3" width="25" height="25" rx="2.5" fill="url(#gFloppy)" stroke="#2538a8" stroke-width="1"/>
<rect x="252.8" y="34.8" width="18" height="11.5" fill="url(#gLabel)"/>
<rect x="254.8" y="48.8" width="13.5" height="9" fill="#e6e6ee" stroke="#aab" stroke-width="0.5"/>
<rect x="257.3" y="50.8" width="2" height="5" fill="#2a50c8"/>
<path d="M258,52 L271.5,35.5 L275.5,38.8 L262,55 L257,56.8 Z" fill="#f2a93a" stroke="#9a5a10" stroke-width="0.8"/>
<path d="M271.5,35.5 L273.5,33 L277.5,36.3 L275.5,38.8 Z" fill="#e84a3a" stroke="#9a3010" stroke-width="0.6"/>
<path d="M257.5,54.5 L257,56.8 L259.3,56" fill="#222"/>
<rect x="306" y="42.8" width="24" height="15" rx="3.2" fill="#000"/>
<circle cx="312" cy="39.6" r="3.3" fill="#000"/>
<circle cx="318" cy="36.8" r="3.3" fill="#000"/>
<circle cx="324" cy="39.6" r="3.3" fill="#000"/>
<path d="M312,39.6 L318,45 M318,36.8 V45 M324,39.6 L318,45" stroke="#000" stroke-width="4"/>
<path d="M312,39.6 L317,44.5 M318,37 V44.5 M324,39.6 L319,44.5" stroke="#f5ab2e" stroke-width="1.6"/>
<circle cx="312" cy="39.6" r="1.8" fill="#f5ab2e"/>
<circle cx="318" cy="36.8" r="1.8" fill="#f5ab2e"/>
<circle cx="324" cy="39.6" r="1.8" fill="#f5ab2e"/>
<path d="M307.5,45 Q318,43 328.5,45 V45.8 H307.5 Z" fill="#f5ab2e"/>
<text transform="translate(318.2,57) scale(0.64,1)" x="0" y="0" font-size="14" font-weight="bold" fill="#fff" text-anchor="middle">SVG</text>
<rect x="366.5" y="32.3" width="18" height="15" rx="1" fill="#f6f6f6" stroke="#9c9c9c" stroke-width="0.8"/>
<rect x="360" y="44" width="28" height="13.5" rx="2.5" fill="url(#gPrinter)" stroke="#8c8c8c" stroke-width="0.8"/>
<rect x="361" y="56.5" width="26" height="2.5" rx="1" fill="#999" opacity="0.6"/>
<path d="M373,44.5 L380.5,51" stroke="#8a8a8a" stroke-width="3" stroke-linecap="round"/>
<circle cx="369.7" cy="40.7" r="6.5" fill="url(#gLens)" stroke="#c8c8c8" stroke-width="1.6"/>
<linearGradient id="gUndo" x1="0" y1="0" x2="1" y2="1"><stop offset="0" stop-color="#8ad67e"/><stop offset="1" stop-color="#1e8c30"/></linearGradient>
<linearGradient id="gRedo" x1="1" y1="0" x2="0" y2="1"><stop offset="0" stop-color="#c8ecc0"/><stop offset="1" stop-color="#7cc88a"/></linearGradient>
<path d="M419.35,40.25 L420.08,39.13 L420.93,38.09 L421.89,37.15 L422.95,36.32 L424.08,35.62 L425.29,35.04 L426.56,34.59 L427.86,34.29 L429.20,34.13 L430.54,34.11 L431.87,34.24 L433.18,34.52 L434.46,34.94 L435.68,35.49 L436.83,36.17 L437.91,36.98 L438.89,37.89 L439.76,38.91 L440.52,40.02 L441.15,41.20 L441.65,42.45 L442.01,43.74 L442.23,45.06 L442.30,46.40 L442.23,47.74 L442.01,49.06 L441.65,50.35 L441.15,51.60 L440.52,52.78 L439.76,53.89 L438.89,54.91 L437.91,55.82 L436.83,56.63 L435.68,57.31 L434.46,57.86 L433.18,58.28 L431.87,58.56 L430.54,58.69 L429.20,58.67 L427.86,58.51 L427.95,58.02 L429.25,57.81 L430.48,57.47 L431.63,57.00 L432.69,56.43 L433.64,55.77 L434.50,55.04 L435.25,54.26 L435.90,53.44 L436.46,52.58 L436.92,51.71 L437.30,50.83 L437.60,49.94 L437.82,49.05 L437.98,48.17 L438.07,47.28 L438.10,46.40 L438.06,45.52 L437.93,44.64 L437.72,43.78 L437.42,42.94 L437.04,42.13 L436.58,41.35 L436.04,40.61 L435.43,39.93 L434.74,39.30 L433.99,38.74 L433.17,38.25 L432.29,37.84 L431.37,37.52 L430.40,37.29 L429.39,37.16 L428.37,37.14 L427.33,37.23 L426.29,37.43 L425.26,37.75 L424.25,38.19 L423.28,38.74 L422.36,39.40 L421.51,40.17 L420.73,41.05 Z" fill="url(#gUndo)" stroke="#1b7a2a" stroke-width="0.6"/>
<path d="M414.8,37.2 L414.8,51.7 L428,51.2 Z" fill="url(#gUndo)" stroke="#1b7a2a" stroke-width="0.6" stroke-linejoin="round"/>
<path d="M483.95,40.25 L483.22,39.13 L482.37,38.09 L481.41,37.15 L480.35,36.32 L479.22,35.62 L478.01,35.04 L476.74,34.59 L475.44,34.29 L474.10,34.13 L472.76,34.11 L471.43,34.24 L470.12,34.52 L468.84,34.94 L467.62,35.49 L466.47,36.17 L465.39,36.98 L464.41,37.89 L463.54,38.91 L462.78,40.02 L462.15,41.20 L461.65,42.45 L461.29,43.74 L461.07,45.06 L461.00,46.40 L461.07,47.74 L461.29,49.06 L461.65,50.35 L462.15,51.60 L462.78,52.78 L463.54,53.89 L464.41,54.91 L465.39,55.82 L466.47,56.63 L467.62,57.31 L468.84,57.86 L470.12,58.28 L471.43,58.56 L472.76,58.69 L474.10,58.67 L475.44,58.51 L475.35,58.02 L474.05,57.81 L472.82,57.47 L471.67,57.00 L470.61,56.43 L469.66,55.77 L468.80,55.04 L468.05,54.26 L467.40,53.44 L466.84,52.58 L466.38,51.71 L466.00,50.83 L465.70,49.94 L465.48,49.05 L465.32,48.17 L465.23,47.28 L465.20,46.40 L465.24,45.52 L465.37,44.64 L465.58,43.78 L465.88,42.94 L466.26,42.13 L466.72,41.35 L467.26,40.61 L467.87,39.93 L468.56,39.30 L469.31,38.74 L470.13,38.25 L471.01,37.84 L471.93,37.52 L472.90,37.29 L473.91,37.16 L474.93,37.14 L475.97,37.23 L477.01,37.43 L478.04,37.75 L479.05,38.19 L480.02,38.74 L480.94,39.40 L481.79,40.17 L482.57,41.05 Z" fill="url(#gRedo)" stroke="#7ab888" stroke-width="0.6"/>
<path d="M488.5,37.2 L488.5,51.7 L475.3,51.2 Z" fill="url(#gRedo)" stroke="#7ab888" stroke-width="0.6" stroke-linejoin="round"/>
<g transform="translate(531.2,44.3) rotate(-45)">
<rect x="-4" y="3.5" width="25" height="6" rx="1" fill="#e8e8e8" opacity="0.0"/>
<rect x="-13" y="-4.6" width="26" height="9.2" rx="1.2" fill="#de7a7a" stroke="#c46a6a" stroke-width="0.6"/>
<rect x="-13" y="-1.4" width="26" height="2.8" fill="#f0f0f0" opacity="0.95"/>
<rect x="-13" y="-4.6" width="6.5" height="9.2" fill="#eeeeee" stroke="#999" stroke-width="0.6"/>
</g>
<ellipse cx="532" cy="57.5" rx="11" ry="1.3" fill="#c8c8c8" opacity="0.7"/>
<path d="M588,47 L591,31.5 L594,32.5 L590,48 Z" fill="#f0f0f0" stroke="#8a8a8a" stroke-width="0.8"/>
<path d="M589,45.5 L601,38 L602,41.5 L591,48 Z" fill="#f0f0f0" stroke="#8a8a8a" stroke-width="0.8"/>
<ellipse cx="581" cy="46.5" rx="5.8" ry="3.5" transform="rotate(15 581 46.5)" fill="none" stroke="#e07a7a" stroke-width="2.2"/>
<ellipse cx="590.5" cy="55" rx="3" ry="5.5" transform="rotate(-10 590.5 55)" fill="none" stroke="#e07a7a" stroke-width="2.2"/>
<path d="M573.5,58 H579.5 M576.5,55 V61" stroke="#333" stroke-width="1"/>
<path d="M618.5,30.5 H638 V58 H618.5 Z" fill="#f4f4f4" stroke="#c4c4c4" stroke-width="0.8"/>
<path d="M621,37 H634 M621,40 H634 M621,43 H634" stroke="#dadada" stroke-width="0.8"/>
<path d="M627,36 H647.5 V58 L643,62 H627 Z" fill="#f4f4f4" stroke="#b4b4b4" stroke-width="0.8"/>
<path d="M643,62 V58 H647.5" fill="#d8d8d8" stroke="#b4b4b4" stroke-width="0.7"/>
<path d="M630.5,43.5 H644 M630.5,46.5 H644 M630.5,49.5 H644 M630.5,52.5 H640" stroke="#cfcfcf" stroke-width="0.8"/>
<path d="M618.5,56.5 H624.5 M621.5,53.5 V59.5" stroke="#333" stroke-width="1"/>
<rect x="665.5" y="33" width="26.5" height="28" rx="1.5" fill="#c08a30" stroke="#a06a10" stroke-width="0.8"/>
<rect x="668.5" y="35.5" width="20.5" height="23" fill="#f8f8f8"/>
<path d="M684,58.5 L689,53.5 V58.5 Z" fill="#9a9a9a"/>
<path d="M672,40 H685 M672,43 H685 M672,46 H685 M672,49 H683" stroke="#c8c8c8" stroke-width="0.8"/>
<rect x="672.5" y="30.5" width="12.5" height="5.5" rx="1.5" fill="#a8aa9a" stroke="#6a6c5e" stroke-width="0.7"/>
<path d="M723,56.5 H745" stroke="#ff0000" stroke-width="1.2"/>
<g transform="translate(734.2,45.4) rotate(-45)">
<path d="M-8.5,-3.6 H10.5 A3.6,3.6 0 0 1 10.5,3.6 H-8.5 L-14.8,0 Z" fill="#d4102a" stroke="#6a3a10" stroke-width="0.8"/>
<rect x="-8.5" y="-3.1" width="17.5" height="2.4" fill="#e85a22"/>
<path d="M-8.5,-3.6 L-14.8,0 L-8.5,3.6 Z" fill="#f0c8a0" stroke="#6a3a10" stroke-width="0.6"/>
<path d="M-12.6,-1.3 L-14.8,0 L-12.6,1.3 Z" fill="#111"/>
<rect x="6.5" y="-3.5" width="2" height="7" fill="#d0d0d0"/>
</g>
<rect x="766.2" y="36.2" width="27.8" height="20.8" rx="0.8" fill="#000080" stroke="#2a2a2a" stroke-width="0.9"/>
<path d="M769.5,53.5 L791,39 V53.5 Z" fill="none" stroke="#fff" stroke-width="1.2" stroke-dasharray="3 1.5"/>
<rect x="805.3" y="25" width="42.2" height="42.5" rx="5" fill="#b6b6b6"/>
<circle cx="825.9" cy="45.9" r="12.9" fill="none" stroke="#000" stroke-width="1.9"/>
<path d="M812.2,60 L840,32" stroke="#1010ff" stroke-width="1"/>
<rect x="862" y="25" width="42.6" height="42.5" rx="5" fill="#b6b6b6"/>
<rect x="870" y="33" width="2" height="2" fill="#000"/>
<rect x="870" y="41" width="2" height="2" fill="#000"/>
<rect x="870" y="49" width="2" height="2" fill="#000"/>
<rect x="870" y="57" width="2" height="2" fill="#000"/>
<rect x="878" y="33" width="2" height="2" fill="#000"/>
<rect x="878" y="41" width="2" height="2" fill="#000"/>
<rect x="878" y="49" width="2" height="2" fill="#000"/>
<rect x="878" y="57" width="2" height="2" fill="#000"/>
<rect x="886" y="33" width="2" height="2" fill="#000"/>
<rect x="886" y="41" width="2" height="2" fill="#000"/>
<rect x="886" y="49" width="2" height="2" fill="#000"/>
<rect x="886" y="57" width="2" height="2" fill="#000"/>
<rect x="894" y="33" width="2" height="2" fill="#000"/>
<rect x="894" y="41" width="2" height="2" fill="#000"/>
<rect x="894" y="49" width="2" height="2" fill="#000"/>
<rect x="894" y="57" width="2" height="2" fill="#000"/>
<ellipse cx="940" cy="58.3" rx="11" ry="1.8" fill="#b0b0b0" opacity="0.35"/>
<path d="M945,51.0 L951.8,57.4" stroke="#5e5e5e" stroke-width="4.2" stroke-linecap="round"/>
<path d="M945.5,50.8 L951,56.0" stroke="#9a9a9a" stroke-width="1" stroke-linecap="round"/>
<circle cx="936" cy="41.8" r="10.7" fill="#ecece4" stroke="#a8a898" stroke-width="0.9"/>
<circle cx="936" cy="41.8" r="8.9" fill="url(#gLens)" stroke="#5a86c8" stroke-width="0.6"/>
<path d="M930.5,41.8 H941.5 M936,36.3 V47.3" stroke="#fff" stroke-width="2.6"/>
<ellipse cx="986" cy="58.3" rx="11" ry="1.8" fill="#b0b0b0" opacity="0.35"/>
<path d="M991,51.0 L997.8,57.4" stroke="#5e5e5e" stroke-width="4.2" stroke-linecap="round"/>
<path d="M991.5,50.8 L997,56.0" stroke="#9a9a9a" stroke-width="1" stroke-linecap="round"/>
<circle cx="982" cy="41.8" r="10.7" fill="#ecece4" stroke="#a8a898" stroke-width="0.9"/>
<circle cx="982" cy="41.8" r="8.9" fill="url(#gLens)" stroke="#5a86c8" stroke-width="0.6"/>
<path d="M976.5,41.8 H987.5" stroke="#fff" stroke-width="2.6"/>
<ellipse cx="1032" cy="58.3" rx="11" ry="1.8" fill="#b0b0b0" opacity="0.35"/>
<path d="M1037,51.0 L1043.8,57.4" stroke="#5e5e5e" stroke-width="4.2" stroke-linecap="round"/>
<path d="M1037.5,50.8 L1043,56.0" stroke="#9a9a9a" stroke-width="1" stroke-linecap="round"/>
<circle cx="1028" cy="41.8" r="10.7" fill="#ecece4" stroke="#a8a898" stroke-width="0.9"/>
<circle cx="1028" cy="41.8" r="8.9" fill="url(#gLens)" stroke="#5a86c8" stroke-width="0.6"/>
<path d="M1022.5,39.8 V36.3 H1026 M1030,36.3 H1033.5 V39.8 M1033.5,43.8 V47.3 H1030 M1026,47.3 H1022.5 V43.8" fill="none" stroke="#fff" stroke-width="2"/>
<ellipse cx="1078" cy="58.3" rx="11" ry="1.8" fill="#b0b0b0" opacity="0.35"/>
<path d="M1083,51.0 L1089.8,57.4" stroke="#5e5e5e" stroke-width="4.2" stroke-linecap="round"/>
<path d="M1083.5,50.8 L1089,56.0" stroke="#9a9a9a" stroke-width="1" stroke-linecap="round"/>
<circle cx="1074" cy="41.8" r="10.7" fill="#ecece4" stroke="#a8a898" stroke-width="0.9" opacity="0.75"/>
<circle cx="1074" cy="41.8" r="8.9" fill="url(#gLensR)" stroke="#5a86c8" stroke-width="0.6"/>
<path d="M1068.5,39.8 V36.3 H1072 M1076,36.3 H1079.5 V39.8 M1079.5,43.8 V47.3 H1076 M1072,47.3 H1068.5 V43.8" fill="none" stroke="#e85a5a" stroke-width="2"/>
<ellipse cx="1124" cy="58.3" rx="11" ry="1.8" fill="#b0b0b0" opacity="0.35"/>
<path d="M1129,51.0 L1135.8,57.4" stroke="#5e5e5e" stroke-width="4.2" stroke-linecap="round"/>
<path d="M1129.5,50.8 L1135,56.0" stroke="#9a9a9a" stroke-width="1" stroke-linecap="round"/>
<circle cx="1120" cy="41.8" r="10.7" fill="#ecece4" stroke="#a8a898" stroke-width="0.9"/>
<circle cx="1120" cy="41.8" r="8.9" fill="url(#gLens)" stroke="#5a86c8" stroke-width="0.6"/>
<path d="M1113,41.8 L1119,36.3 V39.5 H1127 V44.099999999999994 H1119 V47.3 Z" fill="#fff" stroke="#4a76c0" stroke-width="0.5"/>
<rect x="1154.5" y="30.5" width="27.5" height="17.5" rx="1" fill="#fdfdfd" stroke="#6a8ac8" stroke-width="1"/>
<ellipse cx="1172" cy="61.1" rx="11" ry="1.8" fill="#b0b0b0" opacity="0.35"/>
<path d="M1177,53.8 L1183.8,60.2" stroke="#5e5e5e" stroke-width="4.2" stroke-linecap="round"/>
<path d="M1177.5,53.6 L1183,58.8" stroke="#9a9a9a" stroke-width="1" stroke-linecap="round"/>
<circle cx="1168" cy="44.6" r="10.7" fill="#ecece4" stroke="#a8a898" stroke-width="0.9"/>
<circle cx="1168" cy="44.6" r="8.9" fill="url(#gLens)" stroke="#5a86c8" stroke-width="0.6"/>
<path d="M1159.5,46.1 H1176.5" stroke="#5a90d8" stroke-width="2" opacity="0.7"/>
<ellipse cx="1216" cy="58.3" rx="11" ry="1.8" fill="#b0b0b0" opacity="0.35"/>
<path d="M1221,51.0 L1227.8,57.4" stroke="#5e5e5e" stroke-width="4.2" stroke-linecap="round"/>
<path d="M1221.5,50.8 L1227,56.0" stroke="#9a9a9a" stroke-width="1" stroke-linecap="round"/>
<circle cx="1212" cy="41.8" r="10.7" fill="#ecece4" stroke="#a8a898" stroke-width="0.9"/>
<circle cx="1212" cy="41.8" r="8.9" fill="url(#gLens)" stroke="#5a86c8" stroke-width="0.6"/>
<path d="M1212,31.799999999999997 V51.8 M1202,41.8 H1222" stroke="#fff" stroke-width="2.2"/>
<path d="M1212,28.799999999999997 l-3.2,4.8 h6.4z M1212,54.8 l-3.2,-4.8 h6.4z M1199,41.8 l4.8,-3.2 v6.4z M1225,41.8 l-4.8,-3.2 v6.4z" fill="#fff" stroke="#4a7ac8" stroke-width="0.7"/>
<rect x="7" y="77" width="2" height="2" fill="#8e8e8e"/>
<rect x="7" y="83" width="2" height="2" fill="#8e8e8e"/>
<rect x="7" y="89" width="2" height="2" fill="#8e8e8e"/>
<rect x="7" y="95" width="2" height="2" fill="#8e8e8e"/>
<rect x="15" y="73" width="43" height="31" rx="4.5" fill="url(#gBtn2)" stroke="#808080" stroke-width="1.5"/>
<path d="M31.3,79.3 V92.5 L34.2,89.8 L36.6,95.7 L38.8,94.8 L36.5,89.1 L40.4,89 Z" fill="#fff" stroke="#555" stroke-width="1" stroke-linejoin="round"/>
<path d="M67.5,71 V105" stroke="#6e6e6e" stroke-width="1" stroke-dasharray="1 2"/>
<defs>
<marker id="ah" viewBox="0 0 10 10" refX="9" refY="5" markerWidth="4" markerHeight="4" orient="auto-start-reverse"><path d="M0,0 L10,5 L0,10 z" fill="#000"/></marker>
<marker id="ahg" viewBox="0 0 10 10" refX="9" refY="5" markerWidth="4" markerHeight="4" orient="auto-start-reverse"><path d="M0,0 L10,5 L0,10 z" fill="#8a8a8a"/></marker>
<linearGradient id="gTBtn" x1="0" y1="0" x2="0" y2="1"><stop offset="0" stop-color="#f3f3f3"/><stop offset="0.45" stop-color="#e5e5e5"/><stop offset="1" stop-color="#f5f5f5"/></linearGradient>
</defs>
<rect x="1.9500000000000002" y="156.85" width="33.7" height="33.300000000000026" fill="url(#gTBtn)" stroke="#8c8c8c" stroke-width="1.3"/>
<rect x="36.05" y="156.85" width="33.70000000000001" height="33.300000000000026" fill="url(#gTBtn)" stroke="#8c8c8c" stroke-width="1.3"/>
<rect x="1.9500000000000002" y="191.65" width="33.7" height="33.500000000000014" fill="url(#gTBtn)" stroke="#8c8c8c" stroke-width="1.3"/>
<rect x="36.05" y="191.65" width="33.70000000000001" height="33.500000000000014" fill="url(#gTBtn)" stroke="#8c8c8c" stroke-width="1.3"/>
<rect x="1.9500000000000002" y="235.25" width="33.7" height="32.499999999999986" fill="url(#gTBtn)" stroke="#8c8c8c" stroke-width="1.3"/>
<rect x="36.05" y="235.25" width="33.70000000000001" height="32.499999999999986" fill="url(#gTBtn)" stroke="#8c8c8c" stroke-width="1.3"/>
<rect x="1.9500000000000002" y="278.04999999999995" width="33.7" height="33.000000000000014" fill="url(#gTBtn)" stroke="#8c8c8c" stroke-width="1.3"/>
<rect x="36.05" y="278.04999999999995" width="33.70000000000001" height="33.000000000000014" fill="url(#gTBtn)" stroke="#8c8c8c" stroke-width="1.3"/>
<rect x="1.9500000000000002" y="321.15" width="33.7" height="33.000000000000014" fill="url(#gTBtn)" stroke="#8c8c8c" stroke-width="1.3"/>
<rect x="36.05" y="321.15" width="33.70000000000001" height="33.000000000000014" fill="url(#gTBtn)" stroke="#8c8c8c" stroke-width="1.3"/>
<rect x="1.9500000000000002" y="364.34999999999997" width="33.7" height="32.300000000000026" fill="url(#gTBtn)" stroke="#8c8c8c" stroke-width="1.3"/>
<rect x="36.05" y="364.34999999999997" width="33.70000000000001" height="32.300000000000026" fill="url(#gTBtn)" stroke="#8c8c8c" stroke-width="1.3"/>
<rect x="1.9500000000000002" y="406.95" width="33.7" height="32.89999999999999" fill="url(#gTBtn)" stroke="#8c8c8c" stroke-width="1.3"/>
<rect x="36.05" y="406.95" width="33.70000000000001" height="32.89999999999999" fill="url(#gTBtn)" stroke="#8c8c8c" stroke-width="1.3"/>
<rect x="1.9500000000000002" y="449.75" width="33.7" height="32.99999999999996" fill="url(#gTBtn)" stroke="#8c8c8c" stroke-width="1.3"/>
<rect x="1.3" y="191" width="69.1" height="34.8" fill="#ee9898" opacity="0.58"/>
<path d="M7.2,170.5 L11,179.5 M24.5,162.5 L28.3,170.5" stroke="#000" stroke-width="1.1" fill="none"/>
<path d="M9.5,172.8 L25.2,165.3" stroke="#000" stroke-width="1.1" fill="none" marker-start="url(#ah)" marker-end="url(#ah)"/>
<path d="M12,183.3 L30,174.3" stroke="#ff2020" stroke-width="1.1"/>
<path d="M42.5,171 L49,184.5 M59.5,162 L63,168.5" stroke="#000" stroke-width="1.1" fill="none"/>
<path d="M44,171.5 L61,164" stroke="#000" stroke-width="1.1" fill="none" marker-start="url(#ah)" marker-end="url(#ah)"/>
<path d="M8.5,200.5 V217.5 M28,200.5 V209.5" stroke="#000" stroke-width="1.1" fill="none"/>
<path d="M9,203.3 H27.5" stroke="#000" stroke-width="1.1" fill="none" marker-start="url(#ah)" marker-end="url(#ah)"/>
<path d="M45,197.4 H54 M45,217.2 H60" stroke="#000" stroke-width="1.1" fill="none"/>
<path d="M47.4,198 V216.7" stroke="#000" stroke-width="1.1" fill="none" marker-start="url(#ah)" marker-end="url(#ah)"/>
<path d="M8.2,241 V262.7 M27.4,241 V257.5 M21,249 V257.5" stroke="#000" stroke-width="1.1" fill="none"/>
<path d="M8.7,243.9 H26.9" stroke="#000" stroke-width="1.1" fill="none" marker-start="url(#ah)" marker-end="url(#ah)"/>
<path d="M8.7,251.1 H20.5" stroke="#000" stroke-width="1.1" fill="none" marker-start="url(#ah)" marker-end="url(#ah)"/>
<path d="M41.3,241 V262.5 M53.8,241 V257.5 M64.5,241 V250" stroke="#000" stroke-width="1.1" fill="none"/>
<path d="M41.8,244 H53.3" stroke="#000" stroke-width="1.1" fill="none" marker-start="url(#ah)" marker-end="url(#ah)"/>
<path d="M54.3,244 H64" stroke="#000" stroke-width="1.1" fill="none" marker-start="url(#ah)" marker-end="url(#ah)"/>
<path d="M24.2,289.5 V304.5 M12.5,300.3 H28.5" stroke="#000" stroke-width="1.1" fill="none"/>
<text x="24.2" y="288" font-size="7.5" fill="#000" text-anchor="middle">x</text>
<text x="9" y="302.5" font-size="7.5" fill="#000" text-anchor="middle">y</text>
<path d="M63.5,290 H54.5 L45.5,299" stroke="#000" stroke-width="1.1" fill="none" marker-end="url(#ah)"/>
<path d="M6,333.8 L11,336.5 L6,339.2 Z" fill="#000"/>
<path d="M10,336.5 H17.5" stroke="#555" stroke-width="1.2"/>
<rect x="17.5" y="331.5" width="11.5" height="10.5" fill="none" stroke="#333" stroke-width="1"/>
<text x="23.3" y="340.3" font-size="8.5" fill="#222" text-anchor="middle">A</text>
<rect x="40.5" y="329.5" width="25" height="15" fill="none" stroke="#111" stroke-width="1.1"/>
<path d="M53,329.5 V344.5" stroke="#111" stroke-width="1"/>
<circle cx="46.8" cy="336.8" r="2.2" fill="none" stroke="#222" stroke-width="0.9"/>
<path d="M46.8,332.5 V341 M42.5,336.8 H51" stroke="#222" stroke-width="0.9"/>
<text x="59.3" y="341.5" font-size="11" fill="#111" text-anchor="middle">.1</text>
<circle cx="14.8" cy="383.3" r="7.3" fill="none" stroke="#111" stroke-width="1"/>
<path d="M14.3,384 L19.3,376.5" stroke="#000" stroke-width="1.1" fill="none"/>
<path d="M23,370 L19.6,375.8" stroke="#000" stroke-width="1.1" fill="none" marker-end="url(#ah)"/>
<text x="27.4" y="379" font-size="9" fill="#000" text-anchor="middle">R</text>
<circle cx="53" cy="380.5" r="10.3" fill="none" stroke="#111" stroke-width="1"/>
<path d="M44.5,385.3 L61.5,375.7" stroke="#000" stroke-width="1" fill="none" marker-start="url(#ah)" marker-end="url(#ah)"/>
<path d="M9.1,424.8 L13.7,415.8 M12.8,431.4 H24.8" stroke="#000" stroke-width="1.1" fill="none"/>
<path d="M14.4,416.8 Q20.5,421 22.3,430.6" stroke="#000" stroke-width="1.1" fill="none" marker-start="url(#ah)" marker-end="url(#ah)"/>
<path d="M42.7,412 V423.5" stroke="#444" stroke-width="1.3"/>
<path d="M42.7,423.5 A10,10 0 0 1 52.7,433.3" stroke="#ff1010" stroke-width="1.2" fill="none"/>
<path d="M52.5,433.3 H64" stroke="#555" stroke-width="1.3"/>
<path d="M43.6,415.5 A17,17 0 0 1 60.3,432.3" stroke="#000" stroke-width="1.1" fill="none" marker-start="url(#ah)" marker-end="url(#ah)"/>
<path d="M6.4,462 V478 M29.5,462 V470" stroke="#8a8a8a" stroke-width="1.1"/>
<path d="M7,463.8 H29" stroke="#8a8a8a" stroke-width="1" marker-start="url(#ahg)" marker-end="url(#ahg)"/>
<path d="M24.6,455 L20.5,461" stroke="#d0a060" stroke-width="2.2" stroke-linecap="round"/>
<path d="M18.5,460.5 L23,464 L18.5,471.5 L10.5,469.5 Z" fill="#f0dc80" stroke="#d8c060" stroke-width="0.6"/>
<path d="M18.3,461.5 L22.5,464.5" stroke="#d86060" stroke-width="1.6"/>
<defs>
<linearGradient id="gRedH" x1="0" y1="0" x2="1" y2="0"><stop offset="0" stop-color="#e03030" stop-opacity="0.85"/><stop offset="0.85" stop-color="#e03030" stop-opacity="0.85"/><stop offset="1" stop-color="#e03030" stop-opacity="0"/></linearGradient>
<linearGradient id="gRedV" x1="0" y1="0" x2="0" y2="1"><stop offset="0" stop-color="#e03030" stop-opacity="0"/><stop offset="0.2" stop-color="#e03030" stop-opacity="0.8"/><stop offset="0.8" stop-color="#e03030" stop-opacity="0.8"/><stop offset="1" stop-color="#e03030" stop-opacity="0"/></linearGradient>
<radialGradient id="gRing" cx="0.5" cy="0.5" r="0.5"><stop offset="0" stop-color="#ffffff" stop-opacity="0.05"/><stop offset="0.55" stop-color="#ffffff" stop-opacity="0.2"/><stop offset="0.78" stop-color="#ffffff" stop-opacity="0.45"/><stop offset="0.86" stop-color="#9ab0c8" stop-opacity="0.55"/><stop offset="0.94" stop-color="#7890b0" stop-opacity="0.55"/><stop offset="1" stop-color="#7890b0" stop-opacity="0"/></radialGradient>
</defs>
<rect x="0" y="189.8" width="81" height="2" fill="url(#gRedH)"/>
<rect x="0" y="224.8" width="81" height="2" fill="url(#gRedH)"/>
<rect x="0" y="181" width="2" height="54" fill="url(#gRedV)"/>
<rect x="35" y="181" width="2" height="54" fill="url(#gRedV)"/>
<rect x="69.8" y="181" width="2" height="54" fill="url(#gRedV)"/>
<circle cx="61.1" cy="215.8" r="40.5" fill="url(#gRing)"/>
<path d="M61.3,216.2 V238.3 L66.4,233.4 L70.2,242.6 L74,241 L70.2,232 L77.2,231.6 Z" fill="#fff" stroke="#000" stroke-width="1.1" stroke-linejoin="round"/>
<g transform="translate(1185.2,142.8) scale(1.0)">
<path d="M-7.6,0.8 C-7,-4.5 -3,-5.6 0,-5.6 C4,-5.6 7,-4 7.6,0.5 C7,4.5 3.5,5.6 0,5.6 C-4,5.6 -7,4.5 -7.6,0.8 Z" fill="#000"/>
<path d="M-5.3,0.2 C-4.5,-2.4 -2.5,-2.6 0,-2.6 C2.5,-2.6 4.5,-2.3 5,0.3 C4,2.6 2,3 0,3 C-2,3 -4.3,2.6 -5.3,0.2 Z" fill="#fff"/>
<circle cx="-0.3" cy="-0.3" r="2.7" fill="#000"/>
</g>
<g transform="translate(1245.2,142.8) scale(1.0)">
<path d="M-7.6,0.8 C-7,-4.5 -3,-5.6 0,-5.6 C4,-5.6 7,-4 7.6,0.5 C7,4.5 3.5,5.6 0,5.6 C-4,5.6 -7,4.5 -7.6,0.8 Z" fill="#9c9c9c"/>
<path d="M-5.3,0.2 C-4.5,-2.4 -2.5,-2.6 0,-2.6 C2.5,-2.6 4.5,-2.3 5,0.3 C4,2.6 2,3 0,3 C-2,3 -4.3,2.6 -5.3,0.2 Z" fill="#fff"/>
<circle cx="-0.3" cy="-0.3" r="2.7" fill="#9c9c9c"/>
</g>
<path d="M1298.8,142.8 H1311.2 M1305,136.6 V149" stroke="#d81818" stroke-width="3"/>
<path d="M1358.8,142.8 H1371.2" stroke="#d81818" stroke-width="3"/>
<g transform="translate(1418.2,150.3) rotate(-45.39788096183469)">
<path d="M0,0 L3.5,-1.6 H17.86516633862829 V1.6 H3.5 Z" fill="#dba43c" stroke="#8a6020" stroke-width="0.5"/>
<path d="M0,0 L2,-1.0666666666666667 V1.0666666666666667 Z" fill="#333"/>
<rect x="16.86516633862829" y="-1.6" width="3.5" height="3.2" rx="1" fill="#e02020"/>
</g>
<g transform="translate(1423,166.7) scale(1.0)">
<path d="M-7.6,0.8 C-7,-4.5 -3,-5.6 0,-5.6 C4,-5.6 7,-4 7.6,0.5 C7,4.5 3.5,5.6 0,5.6 C-4,5.6 -7,4.5 -7.6,0.8 Z" fill="#000"/>
<path d="M-5.3,0.2 C-4.5,-2.4 -2.5,-2.6 0,-2.6 C2.5,-2.6 4.5,-2.3 5,0.3 C4,2.6 2,3 0,3 C-2,3 -4.3,2.6 -5.3,0.2 Z" fill="#fff"/>
<circle cx="-0.3" cy="-0.3" r="2.7" fill="#000"/>
</g>
<path d="M1442.1,166.2 V163.3 A2.8,2.8 0 0 1 1447.7,163.3 V166.2" fill="none" stroke="#b8b8b8" stroke-width="1.5"/>
<rect x="1440" y="166.0" width="9.8" height="7.8" fill="#b4b4b4"/>
<g transform="translate(1423,186.7) scale(1.0)">
<path d="M-7.6,0.8 C-7,-4.5 -3,-5.6 0,-5.6 C4,-5.6 7,-4 7.6,0.5 C7,4.5 3.5,5.6 0,5.6 C-4,5.6 -7,4.5 -7.6,0.8 Z" fill="#000"/>
<path d="M-5.3,0.2 C-4.5,-2.4 -2.5,-2.6 0,-2.6 C2.5,-2.6 4.5,-2.3 5,0.3 C4,2.6 2,3 0,3 C-2,3 -4.3,2.6 -5.3,0.2 Z" fill="#fff"/>
<circle cx="-0.3" cy="-0.3" r="2.7" fill="#000"/>
</g>
<path d="M1442.1,186.2 V183.3 A2.8,2.8 0 0 1 1447.7,183.3 V186.2" fill="none" stroke="#b8b8b8" stroke-width="1.5"/>
<rect x="1440" y="186.0" width="9.8" height="7.8" fill="#b4b4b4"/>
<g transform="translate(1423,206.7) scale(1.0)">
<path d="M-7.6,0.8 C-7,-4.5 -3,-5.6 0,-5.6 C4,-5.6 7,-4 7.6,0.5 C7,4.5 3.5,5.6 0,5.6 C-4,5.6 -7,4.5 -7.6,0.8 Z" fill="#000"/>
<path d="M-5.3,0.2 C-4.5,-2.4 -2.5,-2.6 0,-2.6 C2.5,-2.6 4.5,-2.3 5,0.3 C4,2.6 2,3 0,3 C-2,3 -4.3,2.6 -5.3,0.2 Z" fill="#fff"/>
<circle cx="-0.3" cy="-0.3" r="2.7" fill="#000"/>
</g>
<path d="M1442.1,206.2 V203.3 A2.8,2.8 0 0 1 1447.7,203.3 V206.2" fill="none" stroke="#b8b8b8" stroke-width="1.5"/>
<rect x="1440" y="206.0" width="9.8" height="7.8" fill="#b4b4b4"/>
<g transform="translate(1423,226.7) scale(1.0)">
<path d="M-7.6,0.8 C-7,-4.5 -3,-5.6 0,-5.6 C4,-5.6 7,-4 7.6,0.5 C7,4.5 3.5,5.6 0,5.6 C-4,5.6 -7,4.5 -7.6,0.8 Z" fill="#000"/>
<path d="M-5.3,0.2 C-4.5,-2.4 -2.5,-2.6 0,-2.6 C2.5,-2.6 4.5,-2.3 5,0.3 C4,2.6 2,3 0,3 C-2,3 -4.3,2.6 -5.3,0.2 Z" fill="#fff"/>
<circle cx="-0.3" cy="-0.3" r="2.7" fill="#000"/>
</g>
<path d="M1442.1,226.2 V223.3 A2.8,2.8 0 0 1 1447.7,223.3 V226.2" fill="none" stroke="#b8b8b8" stroke-width="1.5"/>
<rect x="1440" y="226.0" width="9.8" height="7.8" fill="#b4b4b4"/>
<g transform="translate(1423,246.7) scale(1.0)">
<path d="M-7.6,0.8 C-7,-4.5 -3,-5.6 0,-5.6 C4,-5.6 7,-4 7.6,0.5 C7,4.5 3.5,5.6 0,5.6 C-4,5.6 -7,4.5 -7.6,0.8 Z" fill="#000"/>
<path d="M-5.3,0.2 C-4.5,-2.4 -2.5,-2.6 0,-2.6 C2.5,-2.6 4.5,-2.3 5,0.3 C4,2.6 2,3 0,3 C-2,3 -4.3,2.6 -5.3,0.2 Z" fill="#fff"/>
<circle cx="-0.3" cy="-0.3" r="2.7" fill="#000"/>
</g>
<path d="M1442.1,246.2 V243.3 A2.8,2.8 0 0 1 1447.7,243.3 V246.2" fill="none" stroke="#b8b8b8" stroke-width="1.5"/>
<rect x="1440" y="246.0" width="9.8" height="7.8" fill="#b4b4b4"/>
<g transform="translate(1423,266.7) scale(1.0)">
<path d="M-7.6,0.8 C-7,-4.5 -3,-5.6 0,-5.6 C4,-5.6 7,-4 7.6,0.5 C7,4.5 3.5,5.6 0,5.6 C-4,5.6 -7,4.5 -7.6,0.8 Z" fill="#000"/>
<path d="M-5.3,0.2 C-4.5,-2.4 -2.5,-2.6 0,-2.6 C2.5,-2.6 4.5,-2.3 5,0.3 C4,2.6 2,3 0,3 C-2,3 -4.3,2.6 -5.3,0.2 Z" fill="#fff"/>
<circle cx="-0.3" cy="-0.3" r="2.7" fill="#000"/>
</g>
<path d="M1442.1,266.2 V263.3 A2.8,2.8 0 0 1 1447.7,263.3 V266.2" fill="none" stroke="#b8b8b8" stroke-width="1.5"/>
<rect x="1440" y="266.0" width="9.8" height="7.8" fill="#b4b4b4"/>
<g transform="translate(1394.2,233.6) rotate(-43.70783311375026)">
<path d="M0,0 L3.5,-1.5 H16.3138247041902 V1.5 H3.5 Z" fill="#dba43c" stroke="#8a6020" stroke-width="0.5"/>
<path d="M0,0 L2,-1.0 V1.0 Z" fill="#333"/>
<rect x="15.3138247041902" y="-1.5" width="3.5" height="3.0" rx="1" fill="#e02020"/>
</g>
<rect x="1456.1" y="120" width="42.8" height="42.8" rx="5" fill="#b4b4b4"/>
<rect x="1455.5" y="418" width="44.5" height="41.5" rx="5" fill="#b4b4b4"/>
<path d="M1456,261.7 H1499 M1456,409.6 H1499" stroke="#707070" stroke-width="1" stroke-dasharray="1 2"/>
<rect x="1463.5" y="127.5" width="27" height="27" fill="#fff" stroke="#000" stroke-width="1"/>
<rect x="1463" y="127" width="28" height="4" fill="#000"/>
<rect x="1464" y="128" width="3.5" height="3.2" fill="#fff"/>
<rect x="1463.5" y="174.5" width="27" height="27" fill="#fff" stroke="#000" stroke-width="1"/>
<rect x="1463" y="174" width="28" height="4" fill="#000"/>
<rect x="1464" y="175" width="3.5" height="3.2" fill="#fff"/>
<rect x="1463.5" y="220.5" width="27" height="27" fill="#fff" stroke="#000" stroke-width="1"/>
<rect x="1463" y="220" width="28" height="4" fill="#000"/>
<rect x="1464" y="221" width="3.5" height="3.2" fill="#fff"/>
<rect x="1463.5" y="276.5" width="27" height="27" fill="#fff" stroke="#000" stroke-width="1"/>
<rect x="1463" y="276" width="28" height="4" fill="#000"/>
<rect x="1464" y="277" width="3.5" height="3.2" fill="#fff"/>
<rect x="1463.5" y="322.5" width="27" height="27" fill="#fff" stroke="#000" stroke-width="1"/>
<rect x="1463" y="322" width="28" height="4" fill="#000"/>
<rect x="1464" y="323" width="3.5" height="3.2" fill="#fff"/>
<rect x="1463.5" y="368.5" width="27" height="27" fill="#fff" stroke="#000" stroke-width="1"/>
<rect x="1463" y="368" width="28" height="4" fill="#000"/>
<rect x="1464" y="369" width="3.5" height="3.2" fill="#fff"/>
<rect x="1463.5" y="424.5" width="27" height="27" fill="#fff" stroke="#000" stroke-width="1"/>
<rect x="1463" y="424" width="28" height="4" fill="#000"/>
<rect x="1464" y="425" width="3.5" height="3.2" fill="#fff"/>
<rect x="1463.5" y="471.5" width="27" height="27" fill="#fff" stroke="#000" stroke-width="1"/>
<rect x="1463" y="471" width="28" height="4" fill="#000"/>
<rect x="1464" y="472" width="3.5" height="3.2" fill="#fff"/>
<path d="M1471,140.8 L1476.5,138 V149 L1471,151.8 Z" fill="#bdbdbd" stroke="#333" stroke-width="0.7"/>
<path d="M1473.5,140.5 L1483.5,136 V147.3 L1473.5,151.8 Z" fill="#fff" stroke="#333" stroke-width="0.7"/>
<path d="M1476,148.5 L1481,140 L1481,147 Z" fill="none" stroke="#f03030" stroke-width="0.8"/>
<rect x="1470.3" y="183.8" width="11" height="8" fill="#f4e8c0" stroke="#555" stroke-width="0.7"/>
<circle cx="1478.8" cy="191.3" r="4.5" fill="#f4e8c0" fill-opacity="0.5" stroke="#555" stroke-width="0.7"/>
<rect x="1468.5" y="231" width="17.5" height="11" rx="2.5" fill="#f2f2f2" stroke="#b8c8e0" stroke-width="0.9"/>
<rect x="1468" y="283.0" width="3.2" height="3" fill="#000"/>
<rect x="1473.5" y="283.0" width="12.5" height="3" fill="#fff" stroke="#333" stroke-width="0.7"/>
<rect x="1468" y="288.5" width="3.2" height="3" fill="#000"/>
<rect x="1473.5" y="288.5" width="12.5" height="3" fill="#fff" stroke="#333" stroke-width="0.7"/>
<rect x="1468" y="294.0" width="3.2" height="3" fill="#000"/>
<rect x="1473.5" y="294.0" width="12.5" height="3" fill="#fff" stroke="#333" stroke-width="0.7"/>
<path d="M1469.5,331 H1484.5 L1479,338.5 V345 L1475.5,343 V338.5 Z" fill="#c8c8c8" stroke="#555" stroke-width="0.7"/>
<ellipse cx="1477" cy="331.2" rx="7.5" ry="1.5" fill="#999"/>
<path d="M1468.5,375.5 L1474,379.5 V387.5 L1468.5,391.5 Z" fill="#fff" stroke="#333" stroke-width="0.8"/>
<rect x="1474" y="379.5" width="10.5" height="8" fill="#bbb" stroke="#555" stroke-width="0.6"/>
<path d="M1466.5,383.5 H1488" stroke="#f06060" stroke-width="0.7" stroke-dasharray="2 1"/>
<rect x="1466" y="432.0" width="12" height="0.9" fill="#555"/>
<rect x="1466" y="434.6" width="14" height="0.9" fill="#555"/>
<rect x="1466" y="437.2" width="12" height="0.9" fill="#555"/>
<rect x="1466" y="439.8" width="14" height="0.9" fill="#555"/>
<path d="M1463.5,446.5 H1491" stroke="#000" stroke-width="0.7"/>
<rect x="1466" y="447.8" width="2" height="1.4" fill="#333"/><rect x="1473" y="447.8" width="15" height="1.4" fill="#333"/>
<rect x="1471" y="480" width="12.5" height="15" rx="1" fill="#c8882a" stroke="#8a5a10" stroke-width="0.6"/>
<rect x="1472.5" y="482" width="9.5" height="11.5" fill="#f6f6f6"/>
<rect x="1474.2" y="478.5" width="6" height="3" rx="1" fill="#999" stroke="#555" stroke-width="0.5"/>
<path d="M1474,485.5 H1480 M1474,487.5 H1480 M1474,489.5 H1479" stroke="#bbb" stroke-width="0.6"/>
<circle cx="102.3" cy="118.7" r="5.6" fill="#f8f8f8" stroke="#2a3f8a" stroke-width="2"/>
<path d="M99.5,115.5 L102,120 M104,116 L103,121" stroke="#c05050" stroke-width="0.5"/>
<path d="M102.5,117.5 L107,123" stroke="#f0a020" stroke-width="2"/>
<circle cx="107.3" cy="123.3" r="1.2" fill="#e05050"/>
</svg></body></html>
